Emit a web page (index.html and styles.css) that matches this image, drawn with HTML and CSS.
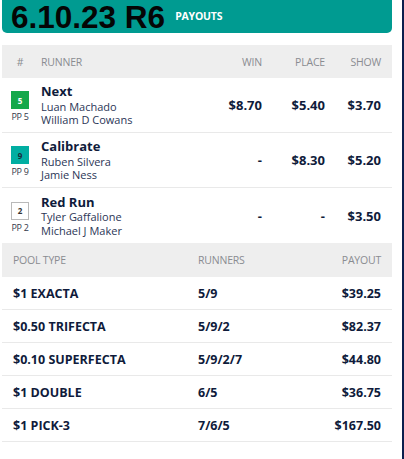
FILE: index.html
```html
<!DOCTYPE html>
<html>
<head>
<meta charset="utf-8">
<link rel="stylesheet" href="styles.css">
</head>
<body>
<div class="frame">
  <main class="results">
    <header class="banner">
      <h1 class="race">6.10.23 R6</h1>
      <span class="tag">PAYOUTS</span>
    </header>

    <section class="finish">
      <div class="row head">
        <span class="c-num">#</span>
        <span class="c-run">RUNNER</span>
        <span class="c-val">WIN</span>
        <span class="c-val">PLACE</span>
        <span class="c-val">SHOW</span>
      </div>

      <div class="row runner">
        <div class="c-num">
          <span class="badge green">5</span>
          <span class="pp">PP 5</span>
        </div>
        <div class="c-run">
          <div class="name">Next</div>
          <div class="person">Luan Machado</div>
          <div class="person">William D Cowans</div>
        </div>
        <span class="c-val money">$8.70</span>
        <span class="c-val money">$5.40</span>
        <span class="c-val money">$3.70</span>
      </div>

      <div class="row runner">
        <div class="c-num">
          <span class="badge teal">9</span>
          <span class="pp">PP 9</span>
        </div>
        <div class="c-run">
          <div class="name">Calibrate</div>
          <div class="person">Ruben Silvera</div>
          <div class="person">Jamie Ness</div>
        </div>
        <span class="c-val money">-</span>
        <span class="c-val money">$8.30</span>
        <span class="c-val money">$5.20</span>
      </div>

      <div class="row runner last">
        <div class="c-num">
          <span class="badge white">2</span>
          <span class="pp">PP 2</span>
        </div>
        <div class="c-run">
          <div class="name">Red Run</div>
          <div class="person">Tyler Gaffalione</div>
          <div class="person">Michael J Maker</div>
        </div>
        <span class="c-val money">-</span>
        <span class="c-val money">-</span>
        <span class="c-val money">$3.50</span>
      </div>
    </section>

    <section class="pools">
      <div class="prow phead">
        <span>POOL TYPE</span>
        <span>RUNNERS</span>
        <span class="pr">PAYOUT</span>
      </div>
      <div class="prow">
        <span>$1 EXACTA</span>
        <span>5/9</span>
        <span class="pr">$39.25</span>
      </div>
      <div class="prow">
        <span>$0.50 TRIFECTA</span>
        <span>5/9/2</span>
        <span class="pr">$82.37</span>
      </div>
      <div class="prow">
        <span>$0.10 SUPERFECTA</span>
        <span>5/9/2/7</span>
        <span class="pr">$44.80</span>
      </div>
      <div class="prow">
        <span>$1 DOUBLE</span>
        <span>6/5</span>
        <span class="pr">$36.75</span>
      </div>
      <div class="prow">
        <span>$1 PICK-3</span>
        <span>7/6/5</span>
        <span class="pr">$167.50</span>
      </div>
    </section>
  </main>
</div>
</body>
</html>
```

FILE: styles.css
```css
* { box-sizing: border-box; }

html, body {
  margin: 0;
  padding: 0;
  background: #ffffff;
}

body {
  font-family: "Open Sans", "Liberation Sans", sans-serif;
  color: #13203f;
}

.frame {
  width: 404px;
  height: 459px;
  border-right: 2px solid #0b1f4e;
  padding-left: 2px;
}

.results {
  width: 390px;
}

.banner {
  height: 33px;
  background: #009b91;
  border-radius: 0 0 5px 5px;
  display: flex;
  align-items: center;
  padding-left: 9px;
  gap: 10px;
}

.race {
  margin: 0;
  font-family: "Liberation Sans", Arial, sans-serif;
  font-weight: 700;
  font-size: 31.5px;
  line-height: 33px;
  color: #050505;
  padding-top: 1px;
}

.tag {
  color: #ffffff;
  font-weight: 700;
  font-size: 10.5px;
  letter-spacing: -0.2px;
  line-height: 12px;
  margin-top: -1px;
}

.finish {
  margin-top: 12px;
}

.row {
  display: grid;
  grid-template-columns: 36px 1fr 60px 63px 56px;
  padding-right: 11px;
  align-items: center;
}

.head {
  height: 33px;
  background: #eeeeee;
  font-size: 10.5px;
  color: #8a8c91;
  letter-spacing: -0.2px;
}

.c-num {
  display: flex;
  flex-direction: column;
  align-items: center;
}

.c-run {
  padding-left: 3px;
}

.c-val {
  text-align: right;
}

.runner {
  height: 55px;
  border-bottom: 1px solid #e9e9e9;
}

.runner.last {
  border-bottom: none;
}

.badge {
  width: 18px;
  height: 18px;
  display: flex;
  align-items: center;
  justify-content: center;
  font-size: 8px;
  font-weight: 700;
  margin-top: 3px;
}

.badge.green { background: #14a84a; color: #ffffff; }
.badge.teal { background: #00aea2; color: #1a2a3a; }
.badge.white { background: #ffffff; color: #333; border: 1px solid #b9b9b9; }

.pp {
  font-size: 9px;
  line-height: 11px;
  margin-top: 2px;
  color: #333a4a;
  letter-spacing: -0.3px;
}

.name {
  font-weight: 700;
  font-size: 13px;
  line-height: 16.5px;
  color: #0f1b3b;
}

.person {
  font-size: 11px;
  line-height: 13.5px;
  color: #2b3656;
}

.money {
  font-weight: 700;
  font-size: 13px;
  color: #0f1b3b;
}

.prow {
  display: grid;
  grid-template-columns: 185px 1fr auto;
  align-items: center;
  padding: 0 11px;
  height: 33px;
  border-bottom: 1px solid #e9e9e9;
  font-weight: 700;
  font-size: 12.5px;
  color: #0f1b3b;
}

.prow.phead {
  height: 34px;
  background: #eeeeee;
  border-bottom: none;
  font-weight: 400;
  font-size: 10.5px;
  color: #8a8c91;
  letter-spacing: -0.2px;
}

.pr {
  text-align: right;
}
```
